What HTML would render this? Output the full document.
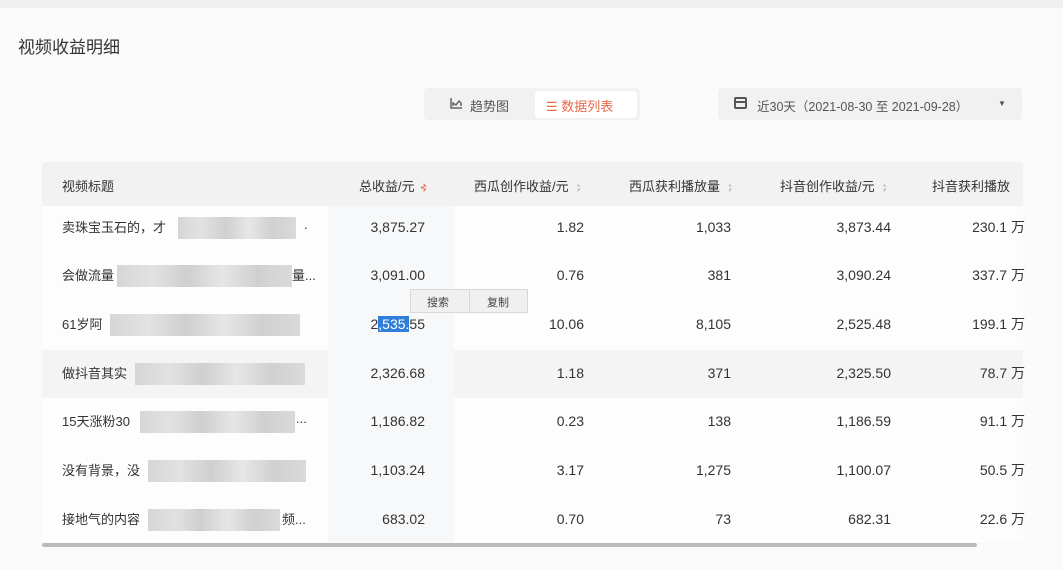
<!DOCTYPE html>
<html><head><meta charset="utf-8"><style>
*{margin:0;padding:0;box-sizing:border-box}
body{width:1063px;height:570px;overflow:hidden;background:#fafafa;font-family:"Liberation Sans","Noto Sans CJK SC",sans-serif;color:#333;position:relative}
.a{position:absolute;white-space:nowrap}
.n{font-size:14px;color:#333;text-align:right}
.h{font-size:13px;color:#333}
.s{display:inline-block;width:6px;height:9px;vertical-align:middle;margin-left:6px;background:linear-gradient(#bbb 0 40%,transparent 40% 60%,#bbb 60%);clip-path:polygon(50% 0,100% 40%,0 40%,0 60%,100% 60%,50% 100%)}
.t{font-size:13px;color:#333}
.w{margin-top:-2px}
.blur{position:absolute;height:22px;background:linear-gradient(90deg,#d6d6d6,#e2e2e2 20%,#cfcfcf 40%,#e6e6e6 60%,#d0d0d0 80%,#dadada)}
</style></head><body>
<div class="a" style="left:0;top:0;width:1063px;height:8px;background:#f0f0f0"></div>
<div class="a" style="left:18px;top:33px;font-size:17px;color:#333">视频收益明细</div>
<div class="a" style="left:424px;top:88px;width:216px;height:32px;background:#f1f1f1;border-radius:4px"></div>
<svg class="a" style="left:450px;top:98px" width="12" height="11" viewBox="0 0 12 11"><path d="M1 0V10H12M3 8V5L6 7L9 3L11 5V8" fill="none" stroke="#666" stroke-width="1.5"/></svg>
<div class="a" style="left:470px;top:96px;font-size:13px;color:#555">趋势图</div>
<div class="a" style="left:535px;top:91px;width:102px;height:27px;background:#fff;border-radius:4px"></div>
<div class="a" style="left:546px;top:96px;font-size:13px;color:#e8694a">☰ 数据列表</div>
<div class="a" style="left:718px;top:88px;width:304px;height:32px;background:#f1f1f1;border-radius:4px"></div>
<div class="a" style="left:734px;top:97px;width:13px;height:12px;border:2px solid #555;border-radius:2px"></div>
<div class="a" style="left:736px;top:101px;width:9px;height:2px;background:#555"></div>
<div class="a" style="left:757px;top:96px;font-size:12.5px;color:#555">近30天（2021-08-30 至 2021-09-28）</div>
<div class="a" style="left:998px;top:99px;font-size:8px;color:#555">▼</div>

<div class="a" style="left:42px;top:162px;width:981px;height:44px;background:#f2f2f2;border-radius:4px 4px 0 0"></div>
<div class="a" style="left:42px;top:206px;width:981px;height:336px;background:#fdfdfd"></div>
<div class="a" style="left:42px;top:350px;width:981px;height:48px;background:#f4f4f4"></div>
<div class="a" style="left:328px;top:206px;width:126px;height:336px;background:#f7f8f9"></div>
<div class="a" style="left:42px;top:543px;width:935px;height:4px;background:#bbb;border-radius:2px"></div>

<div class="a h" style="left:62px;top:176px">视频标题</div>
<div class="a h" style="left:359px;top:176px">总收益/元<span class="s" style="background:#e8694a"></span></div>
<div class="a h" style="left:474px;top:176px">西瓜创作收益/元<span class="s"></span></div>
<div class="a h" style="left:629px;top:176px">西瓜获利播放量<span class="s"></span></div>
<div class="a h" style="left:780px;top:176px">抖音创作收益/元<span class="s"></span></div>
<div class="a h" style="left:932px;top:176px">抖音获利播放</div>

<div class="a t" style="left:62px;top:217px">卖珠宝玉石的，才</div><div class="blur" style="left:178px;top:217px;width:118px"></div><div class="a t" style="left:304px;top:217px">.</div>
<div class="a t" style="left:62px;top:265px">会做流量</div><div class="blur" style="left:117px;top:265px;width:175px"></div><div class="a t" style="left:292px;top:265px">量...</div>
<div class="a t" style="left:62px;top:314px">61岁阿</div><div class="blur" style="left:110px;top:314px;width:190px"></div>
<div class="a t" style="left:62px;top:363px">做抖音其实</div><div class="blur" style="left:135px;top:363px;width:170px"></div>
<div class="a t" style="left:62px;top:411px">15天涨粉30</div><div class="blur" style="left:140px;top:411px;width:155px"></div><div class="a t" style="left:296px;top:411px">...</div>
<div class="a t" style="left:62px;top:460px">没有背景，没</div><div class="blur" style="left:148px;top:460px;width:158px"></div>
<div class="a t" style="left:62px;top:509px">接地气的内容</div><div class="blur" style="left:148px;top:509px;width:132px"></div><div class="a t" style="left:282px;top:509px">频...</div>

<div class="a n" style="right:638px;top:219px">3,875.27</div><div class="a n" style="right:479px;top:219px">1.82</div><div class="a n" style="right:332px;top:219px">1,033</div><div class="a n" style="right:172px;top:219px">3,873.44</div><div class="a n w" style="right:38px;top:219px">230.1 万</div>
<div class="a n" style="right:638px;top:267px">3,091.00</div><div class="a n" style="right:479px;top:267px">0.76</div><div class="a n" style="right:332px;top:267px">381</div><div class="a n" style="right:172px;top:267px">3,090.24</div><div class="a n w" style="right:38px;top:267px">337.7 万</div>
<div class="a n" style="right:638px;top:316px">2<span style="background:#2f7fd8;color:#fff">,535.</span>55</div><div class="a n" style="right:479px;top:316px">10.06</div><div class="a n" style="right:332px;top:316px">8,105</div><div class="a n" style="right:172px;top:316px">2,525.48</div><div class="a n w" style="right:38px;top:316px">199.1 万</div>
<div class="a n" style="right:638px;top:365px">2,326.68</div><div class="a n" style="right:479px;top:365px">1.18</div><div class="a n" style="right:332px;top:365px">371</div><div class="a n" style="right:172px;top:365px">2,325.50</div><div class="a n w" style="right:38px;top:365px">78.7 万</div>
<div class="a n" style="right:638px;top:413px">1,186.82</div><div class="a n" style="right:479px;top:413px">0.23</div><div class="a n" style="right:332px;top:413px">138</div><div class="a n" style="right:172px;top:413px">1,186.59</div><div class="a n w" style="right:38px;top:413px">91.1 万</div>
<div class="a n" style="right:638px;top:462px">1,103.24</div><div class="a n" style="right:479px;top:462px">3.17</div><div class="a n" style="right:332px;top:462px">1,275</div><div class="a n" style="right:172px;top:462px">1,100.07</div><div class="a n w" style="right:38px;top:462px">50.5 万</div>
<div class="a n" style="right:638px;top:511px">683.02</div><div class="a n" style="right:479px;top:511px">0.70</div><div class="a n" style="right:332px;top:511px">73</div><div class="a n" style="right:172px;top:511px">682.31</div><div class="a n w" style="right:38px;top:511px">22.6 万</div>

<div class="a" style="left:410px;top:289px;width:118px;height:24px;background:#f0f0f0;border:1px solid #d8d8d8;font-size:11px;color:#444"><span style="position:absolute;left:16px;top:4px">搜索</span><span style="position:absolute;left:58px;top:0;width:1px;height:22px;background:#d8d8d8"></span><span style="position:absolute;left:76px;top:4px">复制</span></div>
</body></html>
